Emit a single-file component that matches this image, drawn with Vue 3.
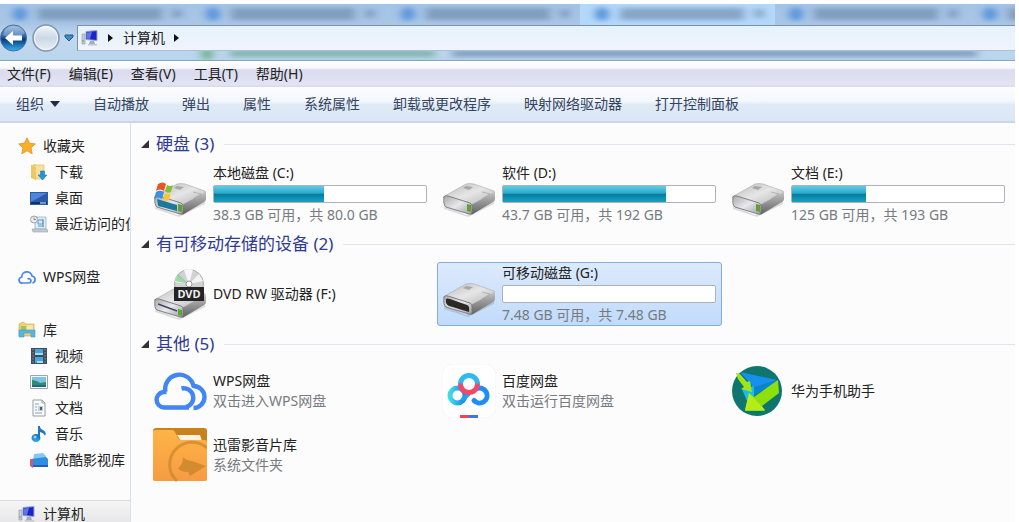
<script setup>
import { ref } from 'vue'

const menus = ['文件(F)', '编辑(E)', '查看(V)', '工具(T)', '帮助(H)']
const tools = ['自动播放', '弹出', '属性', '系统属性', '卸载或更改程序', '映射网络驱动器', '打开控制面板']
const tabs = [20, 213, 408, 602, 796, 990]

const tree = [
  [
    { name: '收藏夹', icon: 'star', root: true },
    { name: '下载', icon: 'download' },
    { name: '桌面', icon: 'desktop' },
    { name: '最近访问的位置', icon: 'recent' },
  ],
  [{ name: 'WPS网盘', icon: 'cloud', root: true }],
  [
    { name: '库', icon: 'library', root: true },
    { name: '视频', icon: 'video' },
    { name: '图片', icon: 'picture' },
    { name: '文档', icon: 'document' },
    { name: '音乐', icon: 'music' },
    { name: '优酷影视库', icon: 'youku' },
  ],
  [{ name: '计算机', icon: 'computer', root: true, active: true }],
]

const groups = [
  {
    name: '硬盘',
    count: 3,
    items: [
      { name: '本地磁盘 (C:)', icon: 'system', used: 52, info: '38.3 GB 可用，共 80.0 GB' },
      { name: '软件 (D:)', icon: 'drive', used: 77, info: '43.7 GB 可用，共 192 GB' },
      { name: '文档 (E:)', icon: 'drive', used: 35, info: '125 GB 可用，共 193 GB' },
    ],
  },
  {
    name: '有可移动存储的设备',
    count: 2,
    items: [
      { name: 'DVD RW 驱动器 (F:)', icon: 'dvd' },
      { name: '可移动磁盘 (G:)', icon: 'removable', used: 0, info: '7.48 GB 可用，共 7.48 GB' },
    ],
  },
  {
    name: '其他',
    count: 5,
    items: [
      { name: 'WPS网盘', icon: 'wps', info: '双击进入WPS网盘' },
      { name: '百度网盘', icon: 'baidu', info: '双击运行百度网盘' },
      { name: '华为手机助手', icon: 'huawei' },
      { name: '迅雷影音片库', icon: 'xunlei', info: '系统文件夹' },
    ],
  },
]

const selected = ref('可移动磁盘 (G:)')
</script>

<template>
  <div class="explorer">
    <!-- shared gradients and symbols -->
    <svg class="defs" aria-hidden="true">
      <defs>
        <linearGradient id="gTop" x1="0" y1="0" x2="1" y2="1">
          <stop offset="0" stop-color="#b8b8b8" /><stop offset=".5" stop-color="#e6e6e6" /><stop offset="1" stop-color="#b4b4b4" />
        </linearGradient>
        <linearGradient id="gSide" x1="0" y1="0" x2="0" y2="1">
          <stop offset="0" stop-color="#c2c2c2" /><stop offset="1" stop-color="#606060" />
        </linearGradient>
        <linearGradient id="gFront" x1="0" y1="0" x2="1" y2="1">
          <stop offset="0" stop-color="#a8a8ac" /><stop offset=".5" stop-color="#e8e8ec" /><stop offset="1" stop-color="#9c9ca0" />
        </linearGradient>
        <linearGradient id="gBack" x1="0" y1="0" x2="0" y2="1">
          <stop offset="0" stop-color="#8fb2d8" /><stop offset=".45" stop-color="#2a62a8" /><stop offset=".55" stop-color="#08397f" /><stop offset="1" stop-color="#35b5ee" />
        </linearGradient>
        <linearGradient id="gForward" x1="0" y1="0" x2="0" y2="1">
          <stop offset="0" stop-color="#f4f8fc" /><stop offset=".5" stop-color="#ccd8e6" /><stop offset="1" stop-color="#e6f0fa" />
        </linearGradient>
        <linearGradient id="gFolder" x1="0" y1="0" x2="0" y2="1">
          <stop offset="0" stop-color="#ffb444" /><stop offset="1" stop-color="#f59b44" />
        </linearGradient>
        <linearGradient id="gBaidu" x1="0" y1="0" x2="1" y2="0">
          <stop offset="0" stop-color="#3fdbe6" /><stop offset="1" stop-color="#1583f2" />
        </linearGradient>
        <linearGradient id="gRing" x1="0" y1="0" x2="0" y2="1">
          <stop offset=".4" stop-color="#2fb9ee" /><stop offset=".55" stop-color="#f5476a" />
        </linearGradient>
        <linearGradient id="gNote" x1="0" y1="0" x2="0" y2="1">
          <stop offset="0" stop-color="#1e6fc0" /><stop offset="1" stop-color="#2fa8e0" />
        </linearGradient>
        <symbol id="computer" viewBox="0 0 18 18">
          <path d="M1 5h3v10H1z" fill="#c9ccd6" stroke="#8b91a4" stroke-width=".6" />
          <path d="M1.500 11h1v2h-1z" fill="#4fae3b" />
          <path d="M5 2.500l11-1v10l-11-1z" fill="#1a25c4" stroke="#9aa6cf" />
          <path d="M6 3.500l5-.5-2 7-3-.3z" fill="#5b74ee" />
          <path d="M9 12h4l1 3H8z" fill="#a6abb8" /><path d="M7 15h9v1.500H7z" fill="#c2c6d0" />
        </symbol>
        <symbol id="body" viewBox="0 0 54 34">
          <path d="M2 22l22 10 28-15v4L26 34 2 26z" fill="#000" opacity=".12" />
          <path d="M1 14L24 1q4-1 8 0l20 7q1 1 0 2L29 22 3 16z" fill="url(#gTop)" stroke="#aaa" stroke-width=".6" />
          <path d="M29 22L53 9v7q0 2-2 3L31 31q-2 1-3 0z" fill="url(#gSide)" />
          <path d="M2 14q1-2 4-1l22 7q2 1 2 3v6q0 3-3 2L4 24q-3-2-2-10z" fill="url(#gFront)" stroke="#777" stroke-width=".9" />
          <path d="M24 3l7 1-4 3-6-2z" fill="#777" opacity=".5" />
          <path d="M40 9l8 2-8 5" fill="none" stroke="#999" stroke-width=".6" />
        </symbol>
      </defs>
    </svg>

    <header class="titlebar">
      <svg class="glass" aria-hidden="true">
        <defs>
          <filter id="soft" x="-5%" y="-50%" width="110%" height="200%"><feGaussianBlur stdDeviation="4 2" /></filter>
        </defs>
        <rect x="580" y="0" width="195" height="22" fill="#b4d8fa" />
        <g filter="url(#soft)">
          <g v-for="x in tabs" :key="x">
            <circle :cx="x" cy="10" r="7" fill="#5c94dc" />
            <rect :x="x + 18" y="4" width="124" height="12" fill="#6884a5" opacity=".6" />
            <rect :x="x + 152" y="5" width="10" height="9" fill="#5f7fa3" opacity=".5" />
          </g>
          <circle cx="207" cy="50" r="6" fill="#6fb48c" />
          <rect x="230" y="46" width="205" height="7" fill="#74aea2" opacity=".8" />
          <rect x="452" y="46" width="525" height="7" fill="#7695b6" opacity=".8" />
        </g>
      </svg>
      <div class="nav">
        <button class="round" aria-label="后退">
          <svg width="28" height="28" viewBox="0 0 28 28">
            <circle cx="13.500" cy="14" r="13" fill="url(#gBack)" stroke="#4a6c94" />
            <path d="M3 11Q14 18 25 9 22 2 13.500 2 5 2 3 11z" fill="#fff" opacity=".25" />
            <path d="M5 14l8-7v4.500h9v5h-9V21z" fill="#fff" />
          </svg>
        </button>
        <button class="round" aria-label="前进">
          <svg width="28" height="28" viewBox="0 0 28 28">
            <circle cx="14" cy="14" r="13" fill="url(#gForward)" stroke="#8396ad" stroke-width="1.500" />
            <circle cx="14" cy="14" r="11.500" fill="none" stroke="#fff" opacity=".7" />
          </svg>
        </button>
        <button class="recent" aria-label="最近的页面">
          <svg width="10" height="8" viewBox="0 0 10 8"><path d="M1 1h8v2L5 7 1 3z" fill="#3a8cc4" stroke="#28577f" /></svg>
        </button>
        <nav class="address" aria-label="地址">
          <svg width="18" height="18"><use href="#computer" /></svg>
          <svg width="6" height="10" viewBox="0 0 6 10"><path d="M0 1l5 4-5 4z" fill="#111" /></svg>
          <a href="#">计算机</a>
          <svg width="6" height="10" viewBox="0 0 6 10"><path d="M0 1l5 4-5 4z" fill="#111" /></svg>
        </nav>
      </div>
    </header>

    <div class="menubar">
      <button v-for="m in menus" :key="m">{{ m }}</button>
    </div>

    <div class="toolbar">
      <button class="organize">
        组织
        <svg width="10" height="6" viewBox="0 0 10 6"><path d="M0 0h10L5 6z" fill="#1e2c48" /></svg>
      </button>
      <button v-for="t in tools" :key="t">{{ t }}</button>
    </div>

    <div class="main">
      <nav class="sidebar">
        <ul v-for="(branch, i) in tree" :key="i">
          <li v-for="n in branch" :key="n.name">
            <a href="#" :class="{ root: n.root, active: n.active }">
              <svg width="18" height="18" viewBox="0 0 18 18" aria-hidden="true">
                <path v-if="n.icon === 'star'" d="M9 .8l2.500 5.400 5.800.7-4.300 4 1.200 5.900L9 13.800l-5.200 3L5 10.900.7 6.900l5.800-.7z" fill="#fbb024" stroke="#df8a34" stroke-width=".8" />
                <template v-else-if="n.icon === 'download'">
                  <path d="M1 2l5-1v15l-5-1z" fill="#f3d67e" /><path d="M4 2h10v14H4z" fill="#f7e09a" stroke="#dcb656" stroke-width=".6" />
                  <path d="M1 2l5 2v13l-5-2z" fill="#ecc764" />
                  <path d="M10.500 8h4v4H17l-4.500 5L8 12h2.500z" fill="#2493dc" stroke="#1668ae" stroke-width=".5" />
                </template>
                <template v-else-if="n.icon === 'desktop'">
                  <path d="M0 3h18v13H0z" fill="#2b5aa8" /><path d="M1 4h16L1 13z" fill="#4a86dc" />
                  <path d="M1 13h16v2H1z" fill="#17305f" /><path d="M10 13h6v2h-6z" fill="#7e96b8" />
                </template>
                <template v-else-if="n.icon === 'recent'">
                  <path d="M5 2h11v12H5z" fill="#dcebf5" stroke="#8fa9bd" stroke-width=".7" />
                  <path d="M8 5h5v4H8zM13 4v8M8 11h6" fill="none" stroke="#5e9cc0" />
                  <path d="M2 14h15l1 3H3z" fill="#c3ccd2" stroke="#8a979f" stroke-width=".5" />
                  <circle cx="4" cy="4.500" r="3.500" fill="#e8eaec" stroke="#9aa5ad" /><path d="M4 2.500v2h2" fill="none" stroke="#666" stroke-width=".7" />
                </template>
                <path v-else-if="n.icon === 'cloud'" d="M11 15H4.500a3 3 0 0 1-.8-6A5.200 5.200 0 0 1 14 8a3.600 3.600 0 0 1 .5 7M11 15a2.200 2.200 0 1 0-1.500-4" fill="none" stroke="#4585f0" stroke-width="1.700" />
                <template v-else-if="n.icon === 'library'">
                  <path d="M1 3l4-2 3 2h8v12H1z" fill="#f0cf72" stroke="#c9a24a" stroke-width=".6" /><path d="M3 5h5v6H3z" fill="#92c964" /><path d="M9 4h6v7H9z" fill="#f7e8a8" />
                  <path d="M1 9h16v7h-4v-4H6v4H1z" fill="#59b6e4" stroke="#3b8fbe" stroke-width=".5" />
                </template>
                <template v-else-if="n.icon === 'video'">
                  <path d="M1 1h16v16H1z" fill="#3e4c5c" /><path d="M5 2h8v6H5zM5 10h8v6H5z" fill="#4aa4d8" /><path d="M5 6h8v2H5zM7 14h6v2H7z" fill="#a3ddf2" />
                  <path d="M3 2v14M15 2v14" stroke="#8996a2" stroke-dasharray="1.500 1.500" />
                </template>
                <template v-else-if="n.icon === 'picture'">
                  <path d="M.5 2.500h17v13H.5z" fill="#f6f8f9" stroke="#9ba6ae" /><path d="M2 4h14v10H2z" fill="#7cc4ea" /><path d="M2 7q6 1 8 3l6-1v5H2z" fill="#318c68" /><path d="M2 12h14v2H2z" fill="#216a84" />
                </template>
                <template v-else-if="n.icon === 'document'">
                  <path d="M3 1h9l3 3v13H3z" fill="#f8fafb" stroke="#959ea6" /><path d="M12 1v3h3" fill="none" stroke="#959ea6" />
                  <path d="M5 5h4M5 8h2M5 11h2M5 14h7" stroke="#8ba2b6" /><path d="M8 7h5v5H8z" fill="#bed0df" /><path d="M10 8h2v3h-2z" fill="#3c5f86" />
                </template>
                <template v-else-if="n.icon === 'music'">
                  <ellipse cx="6" cy="13" rx="4.500" ry="4" fill="url(#gNote)" /><path d="M8 1h2q0 3 3 4 4 2 2 6-1-3-5-4v7H8z" fill="#2176c4" /><circle cx="5" cy="12" r="1.500" fill="#8cd8f4" />
                </template>
                <template v-else-if="n.icon === 'youku'">
                  <path d="M4 3l9-1 3 3v5H3z" fill="#86c8f4" /><path d="M1 8l15-2 2 2v7L2 16z" fill="#2e8ee4" /><path d="M0 8l3 1v8l-3-2z" fill="#c85a7c" /><path d="M3 14h15v2H3z" fill="#2260b4" />
                </template>
                <use v-else href="#computer" />
              </svg>
              <span>{{ n.name }}</span>
            </a>
          </li>
        </ul>
      </nav>

      <main class="content">
        <section v-for="g in groups" :key="g.name">
          <h2>
            <svg width="8" height="8" viewBox="0 0 8 8"><path d="M8 0v8H0z" fill="#333" /></svg>
            <span>{{ g.name }} ({{ g.count }})</span>
          </h2>
          <div class="tiles">
            <button v-for="item in g.items" :key="item.name" class="tile" :class="{ selected: selected === item.name }" @click="selected = item.name">
              <svg width="54" height="54" viewBox="0 0 54 54" aria-hidden="true">
                <template v-if="item.icon === 'wps'">
                  <path d="M36 43.500H11a7.800 7.800 0 0 1-.8-15.500h3.300M12.500 28a14 14 0 1 1 28-6A11 11 0 0 1 40.500 44M28.500 24.500a8.500 8.500 0 1 1 4.500 18.500" fill="none" stroke="#4285f4" stroke-width="4.400" stroke-linejoin="round" />
                </template>
                <template v-else-if="item.icon === 'baidu'">
                  <rect x="0" y="0" width="54" height="54" rx="11" fill="#fff" stroke="#f5f5f5" />
                  <circle cx="15.500" cy="31.500" r="7.500" fill="none" stroke="url(#gBaidu)" stroke-width="5" />
                  <path d="M32 36.500a7.500 7.500 0 1 0 3-12" fill="none" stroke="#1c8ff4" stroke-width="5" stroke-linecap="round" />
                  <path d="M20 36.500l7-7" stroke="#20a0f0" stroke-width="4" />
                  <circle cx="27" cy="20" r="8.500" fill="#fff" stroke="url(#gRing)" stroke-width="5" />
                  <path d="M18 51h9v3h-9z" fill="#ef4357" /><path d="M27 51h9v3h-9z" fill="#3c79dc" />
                </template>
                <template v-else-if="item.icon === 'huawei'">
                  <circle cx="26" cy="27" r="25" fill="#0f766f" />
                  <path d="M9 8l37 8-23 8z" fill="#1590ee" /><path d="M11 25l12-3v11l-7 4z" fill="#18bdec" /><path d="M46 16v3L23 32v-9z" fill="#0a84c8" />
                  <path d="M5 9l4 1 7 8 3-1 2 11-11-3 3-2-6-8z" fill="#9ee51a" />
                  <path d="M47 16l1 13-17 13 3 5H14l4-18 5 4z" fill="#8ee00c" /><path d="M18 29l16 17H14z" fill="#b4ec1a" />
                </template>
                <template v-else-if="item.icon === 'xunlei'">
                  <rect x="0" y="0" width="54" height="53" rx="3" fill="#c9821b" /><path d="M24 7h23l2 6H28z" fill="#fff3e0" />
                  <path d="M0 4q0-2 2-2h17q2 0 3 2l3 6q1 2 4 2h23q2 0 2 2v37q0 2-2 2H2q-2 0-2-2z" fill="url(#gFolder)" />
                  <path d="M54 20a20 20 0 0 0-30 33" fill="none" stroke="#d08a30" stroke-width="3" opacity=".8" />
                  <path d="M30 29q4 4 9 4l14 5-16 10-2-4q-8 0-10-4 5-3 5-11z" fill="#d28b2e" />
                </template>
                <template v-else-if="item.icon === 'dvd'">
                  <use href="#body" x="0" y="19" width="54" height="34" />
                  <path d="M5 37l19 7" stroke="#46465a" stroke-width="1.500" /><path d="M25 42l4 1v6l-4-1z" fill="#5ba62d" />
                  <circle cx="36" cy="17" r="14.500" fill="#d2d2d2" stroke="#aaa" /><path d="M36 17L24 9a14 14 0 0 0-2 6zM36 17l-5-14a14 14 0 0 1 9-.5z" fill="#f7f7f7" />
                  <path d="M36 17L22 14l3-7z" fill="#86d190" opacity=".8" /><path d="M36 17l14-3-4-7z" fill="#f4f4f4" /><circle cx="36" cy="17" r="3" fill="#fff" stroke="#999" />
                  <rect x="21" y="20" width="30" height="14" fill="#232323" />
                  <text x="36" y="31" text-anchor="middle" class="dvd-label">DVD</text>
                </template>
                <template v-else>
                  <use href="#body" x="0" y="16" width="54" height="34" />
                  <path v-if="item.icon === 'removable'" d="M4 32q1-1 4 0l17 6q3 1 2 7L7 39q-4-2-3-7z" fill="#2b2926" />
                  <path v-else d="M25 37l4 1v7l-4-1z" fill="#609f32" />
                  <template v-if="item.icon === 'system'">
                    <path d="M4 32l20 6v6L5 39z" fill="#1c789c" />
                    <path d="M5 17q5-3 8 0l-2 7q-4-3-8 0z" fill="#e65525" /><path d="M14 18q4 2 6 0l-2 7q-4 2-6-1z" fill="#88bd3c" />
                    <path d="M3 25q4-3 8 0l-2 7q-4-3-8 0z" fill="#3a93dc" /><path d="M12 26q4 2 6 0l-2 7q-4 2-6-1z" fill="#f8c62e" />
                  </template>
                </template>
              </svg>
              <span class="text">
                <span class="name">{{ item.name }}</span>
                <span v-if="item.used !== undefined" class="bar">
                  <span class="fill" :style="{ width: item.used + '%' }"></span>
                </span>
                <span v-if="item.info" class="info">{{ item.info }}</span>
              </span>
            </button>
          </div>
        </section>
      </main>
    </div>
  </div>
</template>

<style>
body { background: #fff; }
#app { height: 100vh; overflow: hidden; }
</style>

<style scoped>
.explorer {
  box-sizing: border-box;
  height: 100%;
  padding: 4px 4px 0 0;
  display: flex;
  flex-direction: column;
  overflow: hidden;
  font-family: "Noto Sans", "Noto Sans CJK SC", sans-serif;
  font-size: 14px;
  line-height: 20px;
  color: #222;
}
.defs { position: absolute; width: 0; height: 0; }
svg { flex: none; display: block; }
button { border: 0; padding: 0; background: none; font: inherit; color: inherit; white-space: nowrap; }
a { color: inherit; text-decoration: none; }

.titlebar { position: relative; height: 56px; border-bottom: 1px solid #8aa3bd; background: linear-gradient(#a4c4e6, #a9c6e6 36%, #c0d8f0 60%, #b9d5ec); }
.glass { position: absolute; inset: 0; width: 100%; height: 100%; }
.nav { position: relative; display: flex; align-items: center; padding-top: 20px; }
.round { margin-right: 4px; }
.recent { margin-right: 3px; }
.address {
  flex: 1;
  height: 24px;
  display: flex;
  align-items: center;
  gap: 9px;
  padding-left: 3px;
  border: 1px solid #7d91a8;
  border-right: 0;
  border-bottom-color: #a9bfd4;
  background: linear-gradient(#e6f3fd, #eff3fc);
}

.menubar { display: flex; gap: 18px; padding: 3px 7px; background: linear-gradient(#fff, #f6f7fc 28%, #dadcef 34%, #e2e3f3 90%, #d9dbe2); }
.toolbar {
  display: flex;
  gap: 33px;
  padding: 7px 16px;
  border-bottom: 2px solid #c9d5e8;
  background: linear-gradient(#fbfdff, #f4f8fd 40%, #e0eaf6 52%, #dbe7f6);
  color: #34435f;
}
.organize { display: flex; align-items: center; gap: 6px; }

.main { flex: 1; min-height: 0; display: flex; background: #fcfcfd; }
.sidebar { flex: none; width: 130px; overflow: hidden; padding-top: 10px; border-right: 1px solid #d6e2f0; }
.sidebar ul { list-style: none; margin: 0 0 27px; padding: 0; }
.sidebar a { display: flex; align-items: center; gap: 7px; height: 26px; padding-left: 30px; white-space: nowrap; }
.sidebar a.root { padding-left: 18px; }
.sidebar a.active { box-sizing: border-box; border-top: 1px solid #d9d9dc; background: linear-gradient(#f5f5f6, #e5e5e7); }

.content { flex: 1; min-width: 0; padding-top: 3px; }
h2 { display: flex; align-items: center; height: 36px; margin: 0; padding-left: 10px; gap: 7px; font-size: 17px; font-weight: 400; color: #2f3a93; }
h2::after { content: ''; flex: 1; height: 1px; margin-left: 3px; background: #e3e4ea; }
.tiles { display: grid; grid-template-columns: repeat(3, minmax(0, 1fr)); gap: 6px 4px; padding: 0 4px 0 17px; }
.tile {
  display: flex;
  align-items: center;
  gap: 6px;
  min-height: 58px;
  padding: 0 5px 0 4px;
  border: 1px solid transparent;
  border-radius: 3px;
  text-align: left;
}
.tile.selected { border-color: #84acdd; background: linear-gradient(#dceafc, #c1dbfc); }
.text { flex: 1; min-width: 0; }
.name, .info, .bar, .fill { display: block; }
.info { color: #777b80; }
.bar { box-sizing: border-box; height: 18px; margin: 2px 0; border: 1px solid #aeb1b6; border-radius: 2px; background: #fff; }
.fill { height: 100%; background: linear-gradient(#5fcde6, #2aa9c9 45%, #067b9c 52%, #18a3c4); }
.dvd-label { font: bold 11px "Noto Sans", sans-serif; fill: #eee; }
</style>
